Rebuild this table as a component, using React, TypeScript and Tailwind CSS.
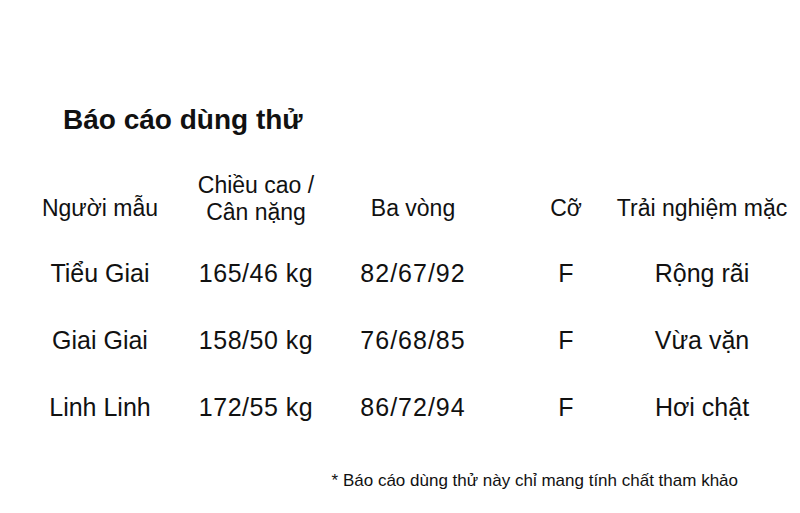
import React from 'react';

const rows = [
  { name: 'Tiểu Giai', body: '165/46 kg', sizes: '82/67/92', fit: 'F', feel: 'Rộng rãi' },
  { name: 'Giai Giai', body: '158/50 kg', sizes: '76/68/85', fit: 'F', feel: 'Vừa vặn' },
  { name: 'Linh Linh', body: '172/55 kg', sizes: '86/72/94', fit: 'F', feel: 'Hơi chật' },
];

const cols = 'grid grid-cols-[160px_152px_162px_144px_128px]';

export default function App() {
  return (
    <div className="w-[800px] h-[513px] bg-white text-[#111] font-['Liberation_Sans',Arial,sans-serif] overflow-hidden">
      {/* Title */}
      <h1 className="pt-[104px] pl-[63px] text-[28px] leading-[32px] font-bold">Báo cáo dùng thử</h1>

      {/* Header */}
      <div className={`${cols} mt-[36px] ml-[20px] text-[23px] leading-[27px]`}>
        <div className="flex justify-center items-end pb-1 whitespace-nowrap">Người mẫu</div>
        <div className="flex flex-col items-center whitespace-nowrap">
          <span>Chiều cao /</span>
          <span>Cân nặng</span>
        </div>
        <div className="flex justify-center items-end pb-1 whitespace-nowrap">Ba vòng</div>
        <div className="flex justify-center items-end pb-1 whitespace-nowrap">Cỡ</div>
        <div className="flex justify-center items-end pb-1 whitespace-nowrap">Trải nghiệm mặc</div>
      </div>

      {/* Rows */}
      <div className="mt-[14px] ml-[20px] text-[25px]">
        {rows.map((r) => (
          <div key={r.name} className={`${cols} h-[67px] items-center`}>
            <div className="flex justify-center whitespace-nowrap">{r.name}</div>
            <div className="flex justify-center whitespace-nowrap tracking-[0.5px]">{r.body}</div>
            <div className="flex justify-center whitespace-nowrap tracking-[1px]">{r.sizes}</div>
            <div className="flex justify-center whitespace-nowrap">{r.fit}</div>
            <div className="flex justify-center whitespace-nowrap">{r.feel}</div>
          </div>
        ))}
      </div>

      {/* Note */}
      <p className="mt-[30px] pr-[62px] text-right text-[17px] leading-[20px]">
        * Báo cáo dùng thử này chỉ mang tính chất tham khảo
      </p>
    </div>
  );
}
